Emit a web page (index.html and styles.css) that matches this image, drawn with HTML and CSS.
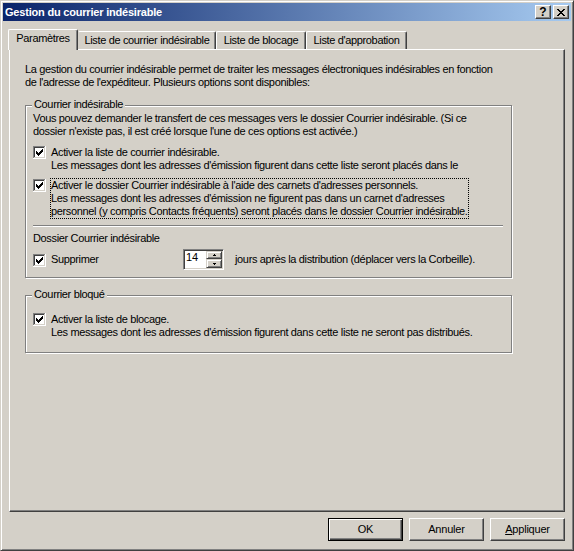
FILE: index.html
```html
<!DOCTYPE html>
<html lang="fr">
<head>
<meta charset="utf-8">
<title>Gestion du courrier indésirable</title>
<link rel="stylesheet" href="styles.css">
</head>
<body>
<div class="window">
  <div class="titlebar">
    <span class="title">Gestion du courrier indésirable</span>
    <div class="caption-btns">
      <span class="cap-btn help">?</span>
      <span class="cap-btn close"><svg width="8" height="7" viewBox="0 0 8 7" shape-rendering="crispEdges"><path d="M0 0h2v1h-2z M6 0h2v1h-2z M1 1h2v1h-2z M5 1h2v1h-2z M2 2h4v1h-4z M3 3h2v1h-2z M2 4h4v1h-4z M1 5h2v1h-2z M5 5h2v1h-2z M0 6h2v1h-2z M6 6h2v1h-2z" fill="#000"/></svg></span>
    </div>
  </div>
  <div class="body">
    <div class="tabs">
      <div class="tab active">Paramètres</div>
      <div class="tab t2">Liste de courrier indésirable</div>
      <div class="tab t3">Liste de blocage</div>
      <div class="tab t4">Liste d'approbation</div>
    </div>
    <div class="panel">
      <p class="intro">La gestion du courrier indésirable permet de traiter les messages électroniques indésirables en fonction<br>de l'adresse de l'expéditeur. Plusieurs options sont disponibles:</p>

      <div class="group g1">
        <span class="legend">Courrier indésirable</span>
        <p class="desc">Vous pouvez demander le transfert de ces messages vers le dossier Courrier indésirable. (Si ce<br>dossier n'existe pas, il est créé lorsque l'une de ces options est activée.)</p>

        <div class="check-row r1">
          <svg class="cb" width="13" height="13" viewBox="0 0 13 13" shape-rendering="crispEdges"><rect width="13" height="13" fill="#fff"/><path d="M0 0h12v1h-12z M0 1h1v11h-1z" fill="#808080"/><path d="M1 1h10v1h-10z M1 2h1v9h-1z" fill="#404040"/><path d="M1 11h11v1h-11z M11 1h1v10h-1z" fill="#d4d0c8"/><path d="M3 5h1v3h-1z M4 6h1v3h-1z M5 7h1v3h-1z M6 6h1v3h-1z M7 5h1v3h-1z M8 4h1v3h-1z M9 3h1v3h-1z" fill="#000"/></svg>
          <div class="label">Activer la liste de courrier indésirable.<br>Les messages dont les adresses d'émission figurent dans cette liste seront placés dans le</div>
        </div>

        <div class="check-row r2">
          <svg class="cb" width="13" height="13" viewBox="0 0 13 13" shape-rendering="crispEdges"><rect width="13" height="13" fill="#fff"/><path d="M0 0h12v1h-12z M0 1h1v11h-1z" fill="#808080"/><path d="M1 1h10v1h-10z M1 2h1v9h-1z" fill="#404040"/><path d="M1 11h11v1h-11z M11 1h1v10h-1z" fill="#d4d0c8"/><path d="M3 5h1v3h-1z M4 6h1v3h-1z M5 7h1v3h-1z M6 6h1v3h-1z M7 5h1v3h-1z M8 4h1v3h-1z M9 3h1v3h-1z" fill="#000"/></svg>
          <div class="label focus">Activer le dossier Courrier indésirable à l'aide des carnets d'adresses personnels.<br>Les messages dont les adresses d'émission ne figurent pas dans un carnet d'adresses<br>personnel (y compris Contacts fréquents) seront placés dans le dossier Courrier indésirable.</div>
        </div>

        <div class="sep"></div>
        <div class="subhead">Dossier Courrier indésirable</div>

        <div class="delete-row">
          <div class="check-row inline">
            <svg class="cb" width="13" height="13" viewBox="0 0 13 13" shape-rendering="crispEdges"><rect width="13" height="13" fill="#fff"/><path d="M0 0h12v1h-12z M0 1h1v11h-1z" fill="#808080"/><path d="M1 1h10v1h-10z M1 2h1v9h-1z" fill="#404040"/><path d="M1 11h11v1h-11z M11 1h1v10h-1z" fill="#d4d0c8"/><path d="M3 5h1v3h-1z M4 6h1v3h-1z M5 7h1v3h-1z M6 6h1v3h-1z M7 5h1v3h-1z M8 4h1v3h-1z M9 3h1v3h-1z" fill="#000"/></svg>
            <span class="label">Supprimer</span>
          </div>
          <div class="spinner">
            <span class="spin-value">14</span>
            <div class="spin-btns">
              <span class="spin-btn up"><svg width="5" height="2" viewBox="0 0 5 2" shape-rendering="crispEdges"><path d="M2 0h1v1h-1z M1 1h3v1h-3z" fill="#000"/></svg></span>
              <span class="spin-btn down"><svg width="5" height="2" viewBox="0 0 5 2" shape-rendering="crispEdges"><path d="M1 0h3v1h-3z M2 1h1v1h-1z" fill="#000"/></svg></span>
            </div>
          </div>
          <span class="after">jours après la distribution (déplacer vers la Corbeille).</span>
        </div>
      </div>

      <div class="group g2">
        <span class="legend">Courrier bloqué</span>
        <div class="check-row r3">
          <svg class="cb" width="13" height="13" viewBox="0 0 13 13" shape-rendering="crispEdges"><rect width="13" height="13" fill="#fff"/><path d="M0 0h12v1h-12z M0 1h1v11h-1z" fill="#808080"/><path d="M1 1h10v1h-10z M1 2h1v9h-1z" fill="#404040"/><path d="M1 11h11v1h-11z M11 1h1v10h-1z" fill="#d4d0c8"/><path d="M3 5h1v3h-1z M4 6h1v3h-1z M5 7h1v3h-1z M6 6h1v3h-1z M7 5h1v3h-1z M8 4h1v3h-1z M9 3h1v3h-1z" fill="#000"/></svg>
          <div class="label">Activer la liste de blocage.<br>Les messages dont les adresses d'émission figurent dans cette liste ne seront pas distribués.</div>
        </div>
      </div>
    </div>

    <div class="buttons">
      <span class="btn default">OK</span>
      <span class="btn">Annuler</span>
      <span class="btn"><u>A</u>ppliquer</span>
    </div>
  </div>
</div>
</body>
</html>
```

FILE: styles.css
```css
* { box-sizing: border-box; }

html, body {
  margin: 0;
  padding: 0;
  background: #d4d0c8;
}

body {
  font-family: "Liberation Sans", Arial, sans-serif;
  font-size: 11px;
  line-height: 13px;
  letter-spacing: -0.35px;
  color: #000;
}

.window {
  width: 574px;
  height: 551px;
  background: #d4d0c8;
  border: 1px solid;
  border-color: #d4d0c8 #404040 #404040 #d4d0c8;
  box-shadow: inset 1px 1px #fff, inset -1px -1px #808080;
  padding: 2px;
  display: flex;
  flex-direction: column;
}

.titlebar {
  height: 18px;
  flex: none;
  display: flex;
  align-items: center;
  justify-content: space-between;
  background: linear-gradient(to right, #0a246a, #a6caf0);
  padding: 0 2px 0 2px;
}

.title {
  color: #fff;
  font-weight: bold;
  letter-spacing: -0.2px;
  line-height: 18px;
}

.caption-btns {
  display: flex;
  gap: 2px;
}

.cap-btn {
  width: 16px;
  height: 14px;
  background: #d4d0c8;
  border: 1px solid;
  border-color: #fff #404040 #404040 #fff;
  box-shadow: inset -1px -1px #808080;
  display: flex;
  align-items: center;
  justify-content: center;
}

.cap-btn.help {
  font-weight: bold;
  font-size: 12px;
  letter-spacing: 0;
  line-height: 12px;
}

.cap-btn.close svg { margin-left: 0; }

.body {
  flex: 1;
  display: flex;
  flex-direction: column;
  padding: 8px 6px 7px 6px;
}

.tabs {
  height: 20px;
  flex: none;
  display: flex;
  align-items: flex-end;
}

.tab {
  height: 18px;
  background: #d4d0c8;
  border-left: 1px solid #fff;
  border-top: 1px solid #fff;
  border-right: 1px solid #404040;
  box-shadow: inset -1px 0 #808080;
  border-radius: 2px 2px 0 0;
  text-align: center;
  white-space: nowrap;
  padding-top: 2px;
}

.tab.active {
  position: relative;
  z-index: 1;
  height: 21px;
  width: 70px;
  margin-left: -1px;
  margin-bottom: -1px;
  padding-top: 2px;
}

.tab.t2 { width: 138px; border-left-color: transparent; }
.tab.t3 { width: 90px; }
.tab.t4 { width: 101px; }

.panel {
  height: 463px;
  flex: none;
  border: 1px solid;
  border-color: #fff #404040 #404040 #fff;
  box-shadow: inset -1px -1px #808080;
  padding: 13px 0 0 15px;
}

p { margin: 0; }

.intro, .desc, .label, .subhead, .after {
  white-space: nowrap;
}

.group {
  position: relative;
  width: 487px;
  border: 1px solid #808080;
  box-shadow: inset 1px 1px #fff, 1px 1px #fff;
  padding: 6px 7px 7px 7px;
}

.g1 { margin-top: 16px; }
.g2 { margin-top: 17px; padding-top: 16px; padding-bottom: 12px; }

.legend {
  position: absolute;
  top: -8px;
  left: 6px;
  padding: 0 2px;
  background: #d4d0c8;
  line-height: 13px;
}

.check-row {
  display: flex;
  align-items: flex-start;
  gap: 4px;
}

.cb {
  flex: none;
  display: block;
  margin-top: 1px;
}

.label {
  border: 1px solid transparent;
}

.label.focus {
  border: 1px dotted #000;
}

.r1 { margin-top: 7px; }
.r2 { margin-top: 5px; }

.sep {
  margin-top: 6px;
  width: 470px;
  height: 2px;
  border-top: 1px solid #808080;
  border-bottom: 1px solid #fff;
}

.subhead { margin-top: 5px; }

.delete-row {
  margin-top: 4px;
  height: 21px;
  display: flex;
  align-items: center;
}

.check-row.inline {
  width: 150px;
  align-items: center;
}

.check-row.inline .cb { margin-top: 1px; }

.spinner {
  width: 41px;
  height: 21px;
  background: #fff;
  border: 1px solid;
  border-color: #808080 #fff #fff #808080;
  box-shadow: inset 1px 1px #404040, inset -1px -1px #d4d0c8;
  padding: 1px;
  display: flex;
}

.spin-value {
  flex: 1;
  padding-left: 1px;
  letter-spacing: 0;
}

.spin-btns {
  width: 16px;
  display: flex;
  flex-direction: column;
}

.spin-btn {
  background: #d4d0c8;
  border: 1px solid;
  border-color: #d4d0c8 #404040 #404040 #d4d0c8;
  box-shadow: inset 1px 1px #fff, inset -1px -1px #808080;
  display: flex;
  align-items: center;
  justify-content: center;
}

.spin-btn.up { height: 8px; }
.spin-btn.down { height: 9px; }
.spin-btn svg { display: block; }

.after { margin-left: 11px; }

.buttons {
  margin-top: 6px;
  height: 23px;
  flex: none;
  display: flex;
  justify-content: flex-end;
  gap: 6px;
}

.btn {
  width: 75px;
  height: 23px;
  background: #d4d0c8;
  border: 1px solid;
  border-color: #fff #404040 #404040 #fff;
  box-shadow: inset -1px -1px #808080;
  display: flex;
  align-items: center;
  justify-content: center;
  letter-spacing: -0.2px;
}

.btn.default {
  border-color: #000;
  box-shadow: inset 1px 1px #fff, inset -1px -1px #404040, inset -2px -2px #808080;
}
```
